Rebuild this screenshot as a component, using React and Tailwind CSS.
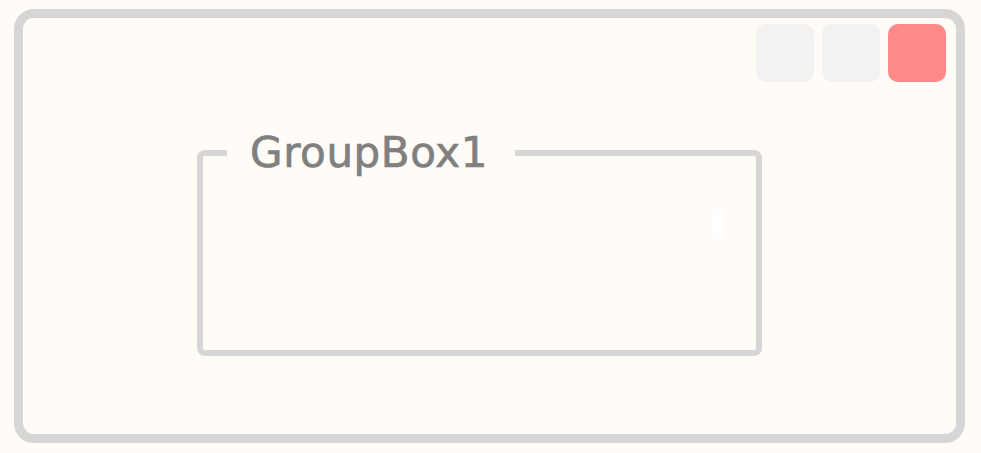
const App = () => {
    return (
        <div className="w-[981px] h-[453px] bg-[#fffcf8] pt-[9px] pl-[14px]" style={{ fontFamily: '"DejaVu Sans", sans-serif' }}>
            <div className="w-[951px] h-[434px] border-[9px] border-[#d6d6d6] rounded-[20px] bg-[#fffcf8] flex flex-col">
                {/* window buttons */}
                <div className="flex justify-end gap-[8px] pt-[6px] pr-[10px]">
                    <div className="w-[58px] h-[58px] rounded-[10px] bg-[#f2f2f2]"></div>
                    <div className="w-[58px] h-[58px] rounded-[10px] bg-[#f2f2f2]"></div>
                    <div className="w-[58px] h-[58px] rounded-[10px] bg-[#ff8888]"></div>
                </div>

                <fieldset className="relative ml-[174px] mt-[50px] w-[565px] h-[224px] border-[6px] border-[#d6d6d6] rounded-[8px] px-[24px] m-0">
                    <legend className="pl-[23px] pr-[27px] text-[42px] leading-none tracking-[0.6px] text-[#808080] [-webkit-text-stroke:0.7px_#808080]">
                        GroupBox1
                    </legend>
                    <div className="absolute left-[510px] top-[35px] w-[10px] h-[30px] rounded-full bg-white"></div>
                </fieldset>
            </div>
        </div>
    );
};

export default App;
